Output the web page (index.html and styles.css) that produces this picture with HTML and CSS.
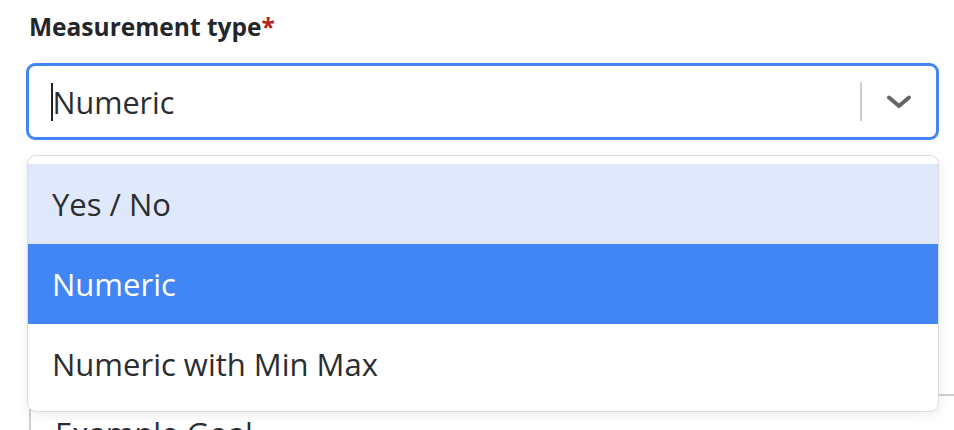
FILE: index.html
```html
<!DOCTYPE html>
<html>
<head>
<meta charset="utf-8">
<link rel="stylesheet" href="styles.css">
</head>
<body>
<div class="form">
  <div class="field">
    <label class="label">Measurement type<span class="req">*</span></label>
    <div class="select">
      <div class="value"><span class="caret"></span>Numeric</div>
      <div class="indicators">
        <span class="sep"></span>
        <svg class="chevron" width="26" height="14" viewBox="0 0 26 14"><path d="M3 2.5 L13 11 L23 2.5" fill="none" stroke="#666" stroke-width="4" stroke-linecap="round" stroke-linejoin="round"/></svg>
      </div>
    </div>
    <div class="menu">
      <div class="option focused">Yes / No</div>
      <div class="option selected">Numeric</div>
      <div class="option">Numeric with Min Max</div>
    </div>
  </div>
  <div class="field goal">
    <div class="textarea">Example Goal</div>
  </div>
</div>
</body>
</html>
```

FILE: styles.css
```css
html, body {
  margin: 0;
  padding: 0;
  background: #fff;
  overflow: hidden;
}
body {
  font-family: "Open Sans", "Liberation Sans", sans-serif;
  color: #2a2d31;
  width: 954px;
  height: 430px;
}
.form {
  padding: 12px 15px 0 26px;
}
.field {
  position: relative;
}
.label {
  display: block;
  font-weight: 700;
  font-size: 24.5px;
  line-height: 30px;
  color: #23272b;
  margin-bottom: 21px;
  margin-left: 3px;
}
.req {
  color: #b3261e;
}
.select {
  display: flex;
  align-items: center;
  height: 77px;
  box-sizing: border-box;
  border: 3px solid #4285f4;
  border-radius: 9px;
  background: #fff;
}
.value {
  flex: 1;
  display: flex;
  align-items: center;
  padding-left: 22px;
  font-size: 30.5px;
  color: #2a2d31;
}
.caret {
  display: inline-block;
  width: 1.5px;
  height: 38px;
  background: #222;
}
.indicators {
  display: flex;
  align-items: center;
  height: 100%;
}
.sep {
  width: 2px;
  height: 39px;
  background: #d0d0d0;
}
.chevron {
  display: block;
  margin: 0 24px 0 24px;
}
.menu {
  position: absolute;
  left: 1px;
  right: 0;
  top: 143px;
  background: #fff;
  border: 1px solid #dcdcdc;
  border-radius: 9px;
  padding: 8px 0 7px;
  box-shadow: 0 3px 12px rgba(0, 0, 0, 0.08);
  z-index: 10;
}
.option {
  height: 80px;
  display: flex;
  align-items: center;
  padding-left: 24px;
  font-size: 31px;
  color: #2a2d31;
}
.option.focused {
  background: #dfe9fb;
}
.option.selected {
  background: #4285f4;
  color: #fff;
}
.goal {
  margin-top: 254px;
  margin-right: -40px;
  margin-left: 3px;
}
.textarea {
  border: 2px solid #cfcfcf;
  border-radius: 9px;
  height: 80px;
  padding: 16px 24px;
  font-size: 31px;
  color: #2a2d31;
}
```
